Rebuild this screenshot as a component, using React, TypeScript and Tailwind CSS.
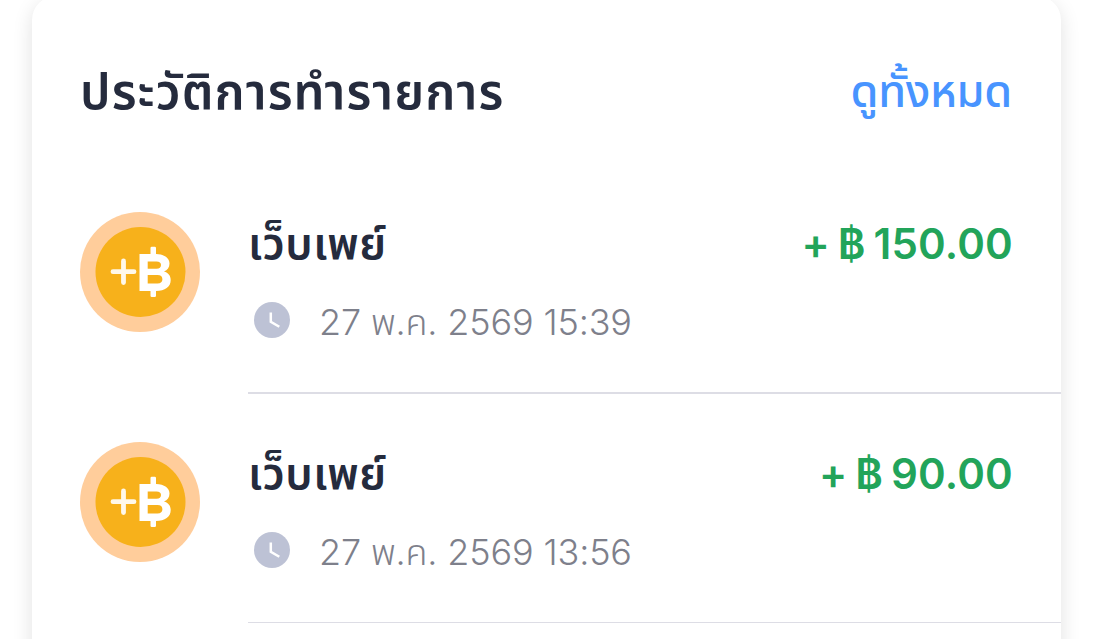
import React from 'react'

const transactions = [
  { id: 1, name: 'เว็บเพย์', date: '27 พ.ค. 2569 15:39', amount: '+ ฿ 150.00', row: 'h-[230px]', line: 'border-b-2' },
  { id: 2, name: 'เว็บเพย์', date: '27 พ.ค. 2569 13:56', amount: '+ ฿ 90.00', row: 'h-[229px]', line: 'border-b' },
]

function CoinIcon() {
  return (
    <svg className="w-[120px] h-[120px] shrink-0" viewBox="0 0 120 120" fill="none">
      <circle cx="60" cy="60" r="60" fill="#FFCD9B" />
      <circle cx="60.5" cy="60" r="45" fill="#F7B11B" />
      <path d="M33 59.700H54M43.500 49V70.500" stroke="#FFF8EA" strokeWidth="4.800" strokeLinecap="round" />
      <path
        fill="#fff"
        fillRule="evenodd"
        d="M59.500 42H70.500V36Q70.500 34.700 71.800 34.700H74.700Q76 34.700 76 36V42C84.500 42.300 89.500 46 89.500 51.500C89.500 55.500 87.500 58 84 59.500C88.500 60.700 90.700 64 90.700 68C90.700 75 85 78.800 76 79V83.700Q76 85 74.700 85H71.800Q70.500 85 70.500 83.700V79H59.500ZM67.700 49.500V56.700H76.500C79.500 56.700 81 55.300 81 53C81 50.700 79.500 49.500 76.500 49.500ZM67.700 63V71.500H77.500C80.800 71.500 82.400 70 82.400 67.300C82.400 64.500 80.800 63 77.500 63Z"
      />
    </svg>
  )
}

function ClockIcon() {
  return (
    <svg className="w-9 h-9 shrink-0" viewBox="0 0 36 36" fill="none">
      <circle cx="18" cy="18" r="18" fill="#BDC2D5" />
      <path d="M16.800 10.500V19.700L25.300 24.800" stroke="#fff" strokeWidth="2.500" />
    </svg>
  )
}

export default function App() {
  return (
    <main className="h-[639px] overflow-hidden bg-white pl-8 pr-[38px] font-['Inter','Noto_Sans_Thai','Noto_Sans',sans-serif]">
      <div className="-mt-1 h-[720px] rounded-3xl bg-white shadow-[0_6px_20px_rgba(0,0,0,0.12)]">
        <div className="flex h-[168px] items-start justify-between pl-12 pr-[49px] pt-[63px] whitespace-nowrap">
          <h1 className="text-[49px] leading-[65px] font-semibold tracking-[1.1px] text-[#252B3D]">ประวัติการทำรายการ</h1>
          <a className="text-[45px] leading-[64px] font-medium tracking-[-0.3px] text-[#4894FF]">ดูทั้งหมด</a>
        </div>

        {transactions.map((item) => (
          <div key={item.id} className={`flex pl-12 ${item.row}`}>
            <div className="pt-12">
              <CoinIcon />
            </div>
            <div className={`ml-12 flex-1 border-[#DDDDE5] pt-12 whitespace-nowrap ${item.line}`}>
              <div className="flex h-[64px] items-center justify-between pr-12">
                <p className="-mt-0.5 text-[44px] leading-[64px] font-semibold tracking-[0.5px] text-[#252B3D]">{item.name}</p>
                <p className="text-[42px] leading-[64px] font-semibold tracking-[0.2px] [word-spacing:-3px] text-[#22A45A]">{item.amount}</p>
              </div>
              <div className="mt-5 flex h-[48px] items-center pl-1.5">
                <ClockIcon />
                <p className="ml-[29px] pt-[3px] text-[36px] leading-[48px] font-light tracking-[-0.15px] text-[#7E808B]">{item.date}</p>
              </div>
            </div>
          </div>
        ))}
      </div>
    </main>
  )
}
